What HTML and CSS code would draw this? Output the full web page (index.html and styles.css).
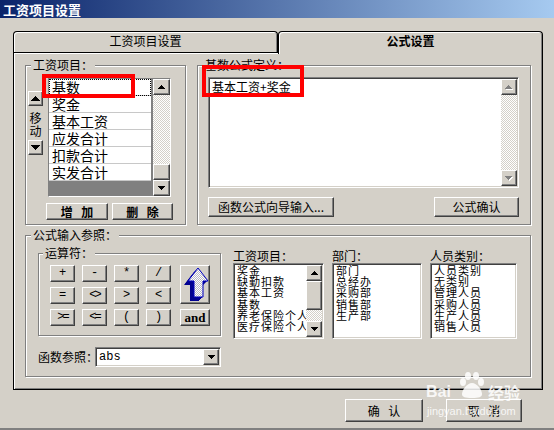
FILE: index.html
```html
<!DOCTYPE html>
<html lang="zh-CN">

<head>
  <meta charset="UTF-8">
  <title>工资项目设置</title>
  <link rel="stylesheet" href="styles.css">
</head>

<body>
  <div class="dialog">
    <div class="titlebar">工资项目设置</div>

    <div class="client">
      <div class="tabs">
        <div class="tab">工资项目设置</div>
        <div class="tab active">公式设置</div>
      </div>

      <div class="panel">
        <div class="top-row">
          <!-- salary items -->
          <div class="group items-group">
            <span class="legend">工资项目：</span>
            <div class="mover">
              <div class="btn mini">
                <svg width="9" height="5" viewBox="0 0 9 5"><path d="M4 0h1v1h1v1h1v1h1v1h1v1H0V4h1V3h1V2h1V1h1z" /></svg>
              </div>
              <div class="mover-label">移<br>动</div>
              <div class="btn mini">
                <svg width="9" height="5" viewBox="0 0 9 5"><path d="M0 0h9v1H8v1H7v1H6v1H5v1H4V4H3V3H2V2H1V1H0z" /></svg>
              </div>
            </div>
            <div class="items-col">
              <div class="grid">
                <div class="rows">
                  <div class="row focus">基数</div>
                  <div class="row">奖金</div>
                  <div class="row">基本工资</div>
                  <div class="row">应发合计</div>
                  <div class="row">扣款合计</div>
                  <div class="row">实发合计</div>
                </div>
                <div class="vscroll">
                  <div class="btn sbtn"><svg width="7" height="4" viewBox="0 0 7 4"><path d="M3 0h1v1h1v1h1v1h1v1H0V3h1V2h1V1h1z" /></svg></div>
                  <div class="track"></div>
                  <div class="btn thumb"></div>
                  <div class="btn sbtn"><svg width="7" height="4" viewBox="0 0 7 4"><path d="M0 0h7v1H6v1H5v1H4v1H3V3H2V2H1V1H0z" /></svg></div>
                </div>
              </div>
              <div class="btn-row">
                <div class="btn push add">增 加</div>
                <div class="btn push del">删 除</div>
              </div>
            </div>
          </div>

          <!-- formula -->
          <div class="group formula-group">
            <span class="legend">基数公式定义：</span>
            <div class="field memo">
              <div class="memo-text">基本工资+奖金</div>
              <div class="vscroll">
                <div class="btn sbtn off"><svg width="8" height="5" viewBox="0 0 8 5"><path fill="#fff" d="M4 1h1v1h1v1h1v1h1v1H1V4h1V3h1V2h1z" /><path fill="#808080" d="M3 0h1v1h1v1h1v1h1v1H0V3h1V2h1V1h1z" /></svg></div>
                <div class="track"></div>
                <div class="btn sbtn off"><svg width="8" height="5" viewBox="0 0 8 5"><path fill="#fff" d="M1 1h7v1H7v1H6v1H5v1H4V4H3V3H2V2H1z" /><path fill="#808080" d="M0 0h7v1H6v1H5v1H4v1H3V3H2V2H1V1H0z" /></svg></div>
              </div>
            </div>
            <div class="formula-actions">
              <div class="btn push wizard">函数公式向导输入...</div>
              <div class="btn push confirm">公式确认</div>
            </div>
          </div>
        </div>

        <!-- reference -->
        <div class="group ref-group">
          <span class="legend">公式输入参照：</span>
          <div class="ref-left">
            <div class="group ops-group">
              <span class="legend">运算符：</span>
              <div class="ops">
                <div class="btn push op">+</div>
                <div class="btn push op">-</div>
                <div class="btn push op">*</div>
                <div class="btn push op">/</div>
                <div class="btn push op">=</div>
                <div class="btn push op tight">&lt;&gt;</div>
                <div class="btn push op">&gt;</div>
                <div class="btn push op">&lt;</div>
                <div class="btn push op tight">&gt;=</div>
                <div class="btn push op tight">&lt;=</div>
                <div class="btn push op">(</div>
                <div class="btn push op">)</div>
                <div class="btn push op op-insert">
                  <svg width="28" height="37" viewBox="0 0 28 37">
                    <defs>
                      <pattern id="chk" width="2" height="2" patternUnits="userSpaceOnUse">
                        <rect width="2" height="2" fill="#fff" />
                        <rect width="1" height="1" fill="#b8b8c8" />
                        <rect x="1" y="1" width="1" height="1" fill="#b8b8c8" />
                      </pattern>
                      <polygon id="arrow" points="17,2 27,15 22,15 22,31 13,31 13,15 7,15" />
                    </defs>
                    <g fill="#000090">
                      <use href="#arrow" transform="translate(-1 1)" />
                      <use href="#arrow" transform="translate(-2 2)" />
                      <use href="#arrow" transform="translate(-3 3)" />
                      <use href="#arrow" transform="translate(-4 4)" />
                    </g>
                    <use href="#arrow" fill="url(#chk)" stroke="#0000c0" stroke-width="1" />
                  </svg>
                </div>
                <div class="btn push op op-and">and</div>
              </div>
            </div>
            <div class="func-row">
              <span class="func-label">函数参照：</span>
              <div class="field combo">
                <span class="combo-text">abs</span>
                <div class="btn sbtn"><svg width="7" height="4" viewBox="0 0 7 4"><path d="M0 0h7v1H6v1H5v1H4v1H3V3H2V2H1V1H0z" /></svg></div>
              </div>
            </div>
          </div>

          <div class="ref-lists">
            <div class="ref-col">
              <div class="ref-label">工资项目：</div>
              <div class="field list list-items">
                <div class="list-text">奖金<br>缺勤扣款<br>基本工资<br>基数<br>养老保险个人<br>医疗保险个人</div>
                <div class="vscroll">
                  <div class="btn sbtn"><svg width="7" height="4" viewBox="0 0 7 4"><path d="M3 0h1v1h1v1h1v1h1v1H0V3h1V2h1V1h1z" /></svg></div>
                  <div class="btn thumb tall"></div>
                  <div class="track"></div>
                  <div class="btn sbtn"><svg width="7" height="4" viewBox="0 0 7 4"><path d="M0 0h7v1H6v1H5v1H4v1H3V3H2V2H1V1H0z" /></svg></div>
                </div>
              </div>
            </div>
            <div class="ref-col">
              <div class="ref-label">部门：</div>
              <div class="field list list-dept">
                <div class="list-text">部门<br>总经办<br>采购部<br>销售部<br>生产部</div>
              </div>
            </div>
            <div class="ref-col">
              <div class="ref-label">人员类别：</div>
              <div class="field list list-type">
                <div class="list-text">人员类别<br>无类别<br>管理人员<br>采购人员<br>生产人员<br>销售人员</div>
              </div>
            </div>
          </div>
        </div>
      </div>

      <div class="footer">
        <div class="btn push ok">确 认</div>
        <div class="btn push cancel">取 消</div>
      </div>
    </div>

    <!-- red annotation boxes -->
    <div class="mark mark-items"></div>
    <div class="mark mark-formula"></div>

    <!-- watermark -->
    <div class="watermark">
      <span class="wm-bai">Bai</span>
      <svg class="wm-paw" width="30" height="26" viewBox="0 0 30 26">
        <ellipse cx="6" cy="10" rx="3" ry="4" />
        <ellipse cx="11" cy="4" rx="3" ry="4" />
        <ellipse cx="19" cy="4" rx="3" ry="4" />
        <ellipse cx="24" cy="10" rx="3" ry="4" />
        <path d="M15 11c5 0 10 7 10 11 0 3-3 4-10 4S5 25 5 22c0-4 5-11 10-11z" />
      </svg>
      <span class="wm-jy">经验</span>
      <span class="wm-url">jingyan.baidu.com</span>
    </div>
  </div>
</body>

</html>
```

FILE: styles.css
```css
* {
  box-sizing: border-box;
}

body {
  margin: 0;
  background: #d4d0c8;
  color: #000;
  font: 12px/14px "Noto Sans CJK SC", "Noto Sans", sans-serif;
}

.dialog {
  position: relative;
  width: 554px;
  height: 430px;
  overflow: hidden;
  background: #d4d0c8;
}

.titlebar {
  height: 18px;
  padding: 2px 0 0 3px;
  background: linear-gradient(to right, #0a246a, #a6caf0);
  color: #fff;
  font-size: 13px;
  font-weight: bold;
  line-height: 16px;
}

.client {
  height: 412px;
  padding: 13px 0 0 13px;
  border-bottom: 2px solid #808080;
}

/* tabs */
.tabs {
  position: relative;
  z-index: 1;
  display: flex;
  width: 530px;
  height: 21px;
}

.tab {
  width: 265px;
  height: 21px;
  border: 1px solid #000;
  border-bottom: 0;
  border-radius: 4px 4px 0 0;
  background: #d4d0c8;
  box-shadow: inset 1px 1px #fff, inset -1px 0 #808080;
  text-align: center;
  line-height: 18px;
}

.tab.active {
  height: 23px;
  font-weight: bold;
}

.panel {
  width: 530px;
  height: 338px;
  padding: 12px 11px;
  border: 1px solid #000;
  box-shadow: inset 1px 1px #fff, inset -1px -1px #808080;
}

/* common controls */
.btn {
  background: #d4d0c8;
  border: 1px solid;
  border-color: #fff #404040 #404040 #fff;
  box-shadow: inset -1px -1px #808080;
}

.push {
  text-align: center;
  line-height: 15px;
}

.field {
  background: #fff;
  border: 1px solid;
  border-color: #808080 #fff #fff #808080;
  box-shadow: inset 1px 1px #404040, inset -1px -1px #d4d0c8;
  padding: 1px;
}

.group {
  position: relative;
  border: 1px solid #808080;
  box-shadow: inset 1px 1px #fff, 1px 1px #fff;
}

.legend {
  position: absolute;
  top: -8px;
  left: 5px;
  padding: 0 2px;
  background: #d4d0c8;
  line-height: 14px;
  white-space: nowrap;
}

.vscroll {
  display: flex;
  flex-direction: column;
  width: 16px;
}

.sbtn {
  flex: none;
  display: flex;
  align-items: center;
  justify-content: center;
  width: 16px;
  height: 16px;
}

.track {
  flex: 1;
  background: repeating-conic-gradient(#fff 0 25%, #d4d0c8 0 50%) 0 0 / 2px 2px;
}

.thumb {
  flex: none;
  height: 16px;
}

.thumb.tall {
  height: 29px;
}

svg {
  display: block;
}

/* top row */
.top-row {
  display: flex;
  gap: 11px;
  height: 160px;
}

.items-group {
  display: flex;
  width: 161px;
  padding: 12px 0 0 2px;
}

.mover {
  display: flex;
  flex-direction: column;
  align-items: center;
  width: 15px;
  padding-top: 13px;
}

.mini {
  display: flex;
  align-items: center;
  justify-content: center;
  width: 15px;
  height: 15px;
}

.mover-label {
  margin: 5px 0 3px;
  font-size: 12px;
  line-height: 13px;
  text-align: center;
}

.items-col {
  margin-left: 3px;
}

.grid {
  display: flex;
  justify-content: space-between;
  width: 123px;
  height: 119px;
  margin-left: 2px;
  border: 1px solid;
  border-color: #808080 #fff #fff #808080;
  background: #808080;
}

.rows {
  width: 102px;
}

.row {
  height: 17px;
  padding-left: 3px;
  background: #fff;
  border-bottom: 1px solid #c8c8c8;
  font-size: 14px;
  line-height: 16px;
}

.row.focus {
  outline: 1px dotted #000;
  outline-offset: -1px;
}

.grid .vscroll {
  width: 17px;
}

.grid .sbtn {
  width: 17px;
}

.btn-row {
  display: flex;
  gap: 4px;
  margin-top: 6px;
}

.add,
.del {
  height: 17px;
  font-weight: bold;
  word-spacing: 6px;
}

.add {
  width: 62px;
}

.del {
  width: 61px;
}

.formula-group {
  width: 334px;
  padding: 11px 11px 0 10px;
}

.memo {
  display: flex;
  height: 111px;
}

.memo-text {
  flex: 1;
  padding: 1px 2px;
}

.formula-actions {
  display: flex;
  justify-content: space-between;
  margin-top: 9px;
}

.wizard,
.confirm {
  height: 20px;
  line-height: 18px;
}

.wizard {
  width: 126px;
}

.confirm {
  width: 85px;
}

/* reference group */
.ref-group {
  display: flex;
  height: 142px;
  margin-top: 10px;
  padding: 12px 0 0 12px;
}

.ref-left {
  width: 183px;
}

.ops-group {
  height: 83px;
  margin-top: 5px;
  padding: 11px 0 0 11px;
}

.ops-group .legend {
  left: 4px;
}

.ops {
  display: grid;
  grid-template-columns: repeat(4, 25px) 32px;
  grid-template-rows: repeat(3, 17px);
  column-gap: 7px;
  row-gap: 5px;
}

.op {
  font-family: "Liberation Mono", monospace;
  font-size: 12px;
}

.op.tight {
  letter-spacing: -2px;
}

.op-insert {
  grid-area: 1 / 5 / 3 / 6;
  justify-self: end;
  display: flex;
  align-items: center;
  justify-content: center;
  width: 30px;
}

.op-and {
  grid-area: 3 / 5 / 4 / 6;
  justify-self: end;
  width: 30px;
  font-family: "Liberation Serif", serif;
  font-size: 13px;
  font-weight: bold;
}

.func-row {
  display: flex;
  align-items: center;
  margin-top: 11px;
}

.func-label {
  width: 57px;
  white-space: nowrap;
}

.combo {
  display: flex;
  align-items: center;
  justify-content: space-between;
  width: 126px;
  height: 20px;
}

.combo-text {
  padding-left: 2px;
  font-family: "Liberation Mono", monospace;
  font-size: 12px;
}

.ref-lists {
  display: flex;
  gap: 8px;
  margin-left: 12px;
}

.ref-label {
  height: 15px;
  line-height: 15px;
  white-space: nowrap;
}

.list {
  display: flex;
  height: 76px;
}

.list-text {
  flex: 1;
  overflow: hidden;
  padding: 0 2px;
  white-space: nowrap;
  font-size: 11px;
  letter-spacing: 1px;
  line-height: 11.2px;
}

.list-items {
  width: 91px;
}

.list-dept {
  width: 90px;
}

.list-type {
  width: 87px;
}

/* footer */
.footer {
  display: flex;
  justify-content: flex-end;
  gap: 23px;
  width: 530px;
  margin-top: 9px;
  padding-right: 21px;
}

.ok,
.cancel {
  height: 23px;
  line-height: 21px;
  word-spacing: 6px;
}

.ok {
  width: 78px;
}

.cancel {
  width: 76px;
}

/* red marks */
.mark {
  position: absolute;
  border: 4px solid #f00;
}

.mark-items {
  left: 42px;
  top: 74px;
  width: 93px;
  height: 24px;
}

.mark-formula {
  left: 202px;
  top: 65px;
  width: 102px;
  height: 32px;
}

/* watermark */
.watermark {
  position: absolute;
  left: 426px;
  top: 370px;
  width: 100px;
  height: 50px;
  color: rgba(255, 255, 255, 0.85);
  fill: rgba(255, 255, 255, 0.85);
  font-family: "Liberation Sans", sans-serif;
}

.wm-bai {
  position: absolute;
  left: 0;
  top: 14px;
  font-size: 16px;
  font-weight: bold;
  line-height: 16px;
}

.wm-paw {
  position: absolute;
  left: 31px;
  top: 2px;
}

.wm-jy {
  position: absolute;
  left: 62px;
  top: 14px;
  font-family: "Noto Sans CJK SC", sans-serif;
  font-size: 16px;
  font-weight: bold;
  line-height: 16px;
}

.wm-url {
  position: absolute;
  left: 1px;
  top: 35px;
  font-size: 11px;
  line-height: 12px;
}
```
